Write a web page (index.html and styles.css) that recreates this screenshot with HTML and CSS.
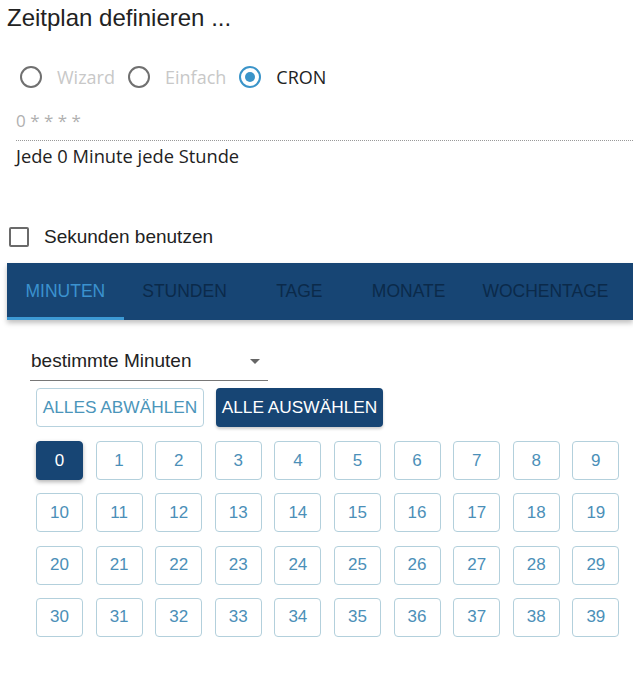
FILE: index.html
```html
<!DOCTYPE html>
<html lang="de">
<head>
<meta charset="utf-8">
<link rel="stylesheet" href="styles.css">
</head>
<body>
<div class="page">
  <h1 class="title">Zeitplan definieren ...</h1>
  <div class="radios">
    <label class="radio"><span class="circle"></span><span class="rlabel dim">Wizard</span></label>
    <label class="radio"><span class="circle"></span><span class="rlabel dim">Einfach</span></label>
    <label class="radio"><span class="circle on"><span class="dot"></span></span><span class="rlabel">CRON</span></label>
  </div>
  <div class="cron">
    <div class="cron-input">0 * * * *</div>
    <div class="cron-text">Jede 0 Minute jede Stunde</div>
  </div>
  <label class="check"><span class="box"></span><span class="clabel">Sekunden benutzen</span></label>
  <div class="tabs">
    <div class="tab active">MINUTEN</div>
    <div class="tab">STUNDEN</div>
    <div class="tab">TAGE</div>
    <div class="tab">MONATE</div>
    <div class="tab">WOCHENTAGE</div>
  </div>
  <div class="panel">
    <div class="select">
      <span>bestimmte Minuten</span>
      <span class="arrow"></span>
    </div>
    <div class="actions">
      <button class="btn outline">ALLES ABWÄHLEN</button>
      <button class="btn filled">ALLE AUSWÄHLEN</button>
    </div>
    <div class="grid">
      <button class="num sel">0</button><button class="num">1</button><button class="num">2</button><button class="num">3</button><button class="num">4</button><button class="num">5</button><button class="num">6</button><button class="num">7</button><button class="num">8</button><button class="num">9</button>
      <button class="num">10</button><button class="num">11</button><button class="num">12</button><button class="num">13</button><button class="num">14</button><button class="num">15</button><button class="num">16</button><button class="num">17</button><button class="num">18</button><button class="num">19</button>
      <button class="num">20</button><button class="num">21</button><button class="num">22</button><button class="num">23</button><button class="num">24</button><button class="num">25</button><button class="num">26</button><button class="num">27</button><button class="num">28</button><button class="num">29</button>
      <button class="num">30</button><button class="num">31</button><button class="num">32</button><button class="num">33</button><button class="num">34</button><button class="num">35</button><button class="num">36</button><button class="num">37</button><button class="num">38</button><button class="num">39</button>
    </div>
  </div>
</div>
</body>
</html>
```
FILE: styles.css
```css
html, body { margin: 0; padding: 0; background: #fff; }
body { font-family: "Liberation Sans", Arial, sans-serif; color: #222; overflow: hidden; }
.page { width: 633px; height: 680px; overflow: hidden; }

.title { margin: 0; padding: 4px 0 0 7px; font-size: 24px; font-weight: normal; line-height: 28px; color: #222; }

.radios { display: flex; align-items: center; margin: 32px 0 0 20px; height: 26px; }
.radio { display: flex; align-items: center; margin-right: 13px; }
.circle { width: 18px; height: 18px; border: 2px solid #707070; border-radius: 50%; display: flex; align-items: center; justify-content: center; }
.circle.on { border-color: #3a94c9; }
.dot { width: 10px; height: 10px; border-radius: 50%; background: #3a94c9; }
.rlabel { margin-left: 15px; font-family: "Open Sans", "Noto Sans", sans-serif; font-size: 18px; color: #222; }
.rlabel.dim { color: #c8c8c8; }

.cron { margin: 19px 0 0 16px; font-family: "Open Sans", "Noto Sans", sans-serif; }
.cron-input { font-size: 17px; color: #b0b0b0; height: 24px; line-height: 24px; padding-bottom: 7px; border-bottom: 1px dotted #999; }
.cron-text { font-size: 18.3px; color: #222; line-height: 26px; margin-top: 2px; }

.check { display: flex; align-items: center; margin: 56px 0 0 9px; height: 24px; }
.box { width: 16px; height: 16px; border: 2px solid #6a6a6a; border-radius: 2px; }
.clabel { margin-left: 15px; font-size: 19px; color: #222; }

.tabs { display: flex; margin: 14px 0 0 7px; height: 57px; background: #174574; box-shadow: 0 3px 5px rgba(0,0,0,0.25); }
.tab { box-sizing: border-box; min-width: 108px; padding: 0 18.5px; display: flex; align-items: center; justify-content: center; font-size: 17.5px; color: #0b2a4a; height: 57px; border-bottom: 3px solid transparent; padding-top: 2px; }
.tab.active { color: #3b92cf; border-bottom-color: #3d9ad5; }

.panel { padding: 23px 0 0 30px; }
.select { width: 238px; box-sizing: border-box; height: 38px; padding: 6px 8px 7px 1px; border-bottom: 1px solid #777; display: flex; align-items: center; justify-content: space-between; font-size: 19px; line-height: 24px; color: #222; }
.arrow { width: 0; height: 0; border-left: 5px solid transparent; border-right: 5px solid transparent; border-top: 5px solid #666; }

.actions { display: flex; gap: 12px; margin: 7px 0 0 6px; }
.btn { font-family: "Liberation Sans", Arial, sans-serif; font-size: 17.3px; height: 39px; padding: 0 4px; border-radius: 4px; cursor: pointer; white-space: nowrap; }
.btn.outline { width: 168px; background: #fff; color: #4b95ba; border: 1px solid #b7d2de; }
.btn.filled { width: 167px; background: #174574; color: #fff; border: none; box-shadow: 0 2px 3px rgba(0,0,0,0.2); }

.grid { display: grid; grid-template-columns: repeat(10, 47px); column-gap: 12.6px; row-gap: 13.3px; margin: 14px 0 0 6px; }
.num { width: 47px; height: 39px; border: 1px solid #b3d0dc; border-radius: 4px; background: #fff; color: #4b8fb8; font-family: "Liberation Sans", Arial, sans-serif; font-size: 17px; padding: 0; }
.num.sel { background: #174574; color: #fff; border-color: #174574; box-shadow: 0 2px 4px rgba(0,0,0,0.3); }
```
